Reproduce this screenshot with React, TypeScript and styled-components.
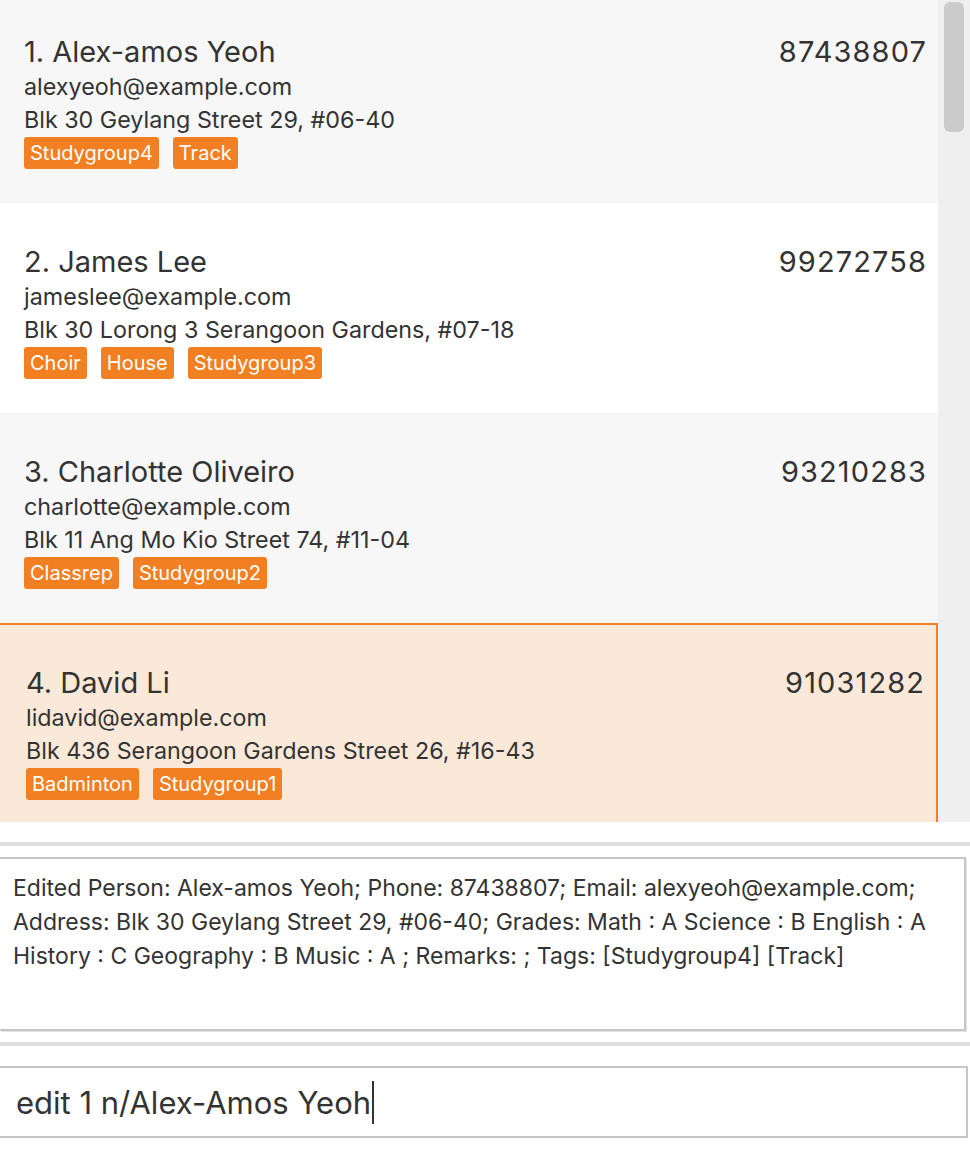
import styled, { createGlobalStyle } from 'styled-components';

const GlobalStyle = createGlobalStyle`
  html, body {
    margin: 0;
    padding: 0;
    background: #ffffff;
  }
  body {
    font-family: Inter, "Noto Sans", "Liberation Sans", sans-serif;
    color: #333333;
  }
`;

const palette = {
  text: '#333333',
  orange: '#f28023',
  selected: '#fae9d8',
  odd: '#f7f7f7',
  track: '#efefef',
  thumb: '#cbcbcb',
  rule: '#dfdfdf',
  border: '#c6c6c6',
};

const Page = styled.div`
  width: 970px;
  height: 1154px;
  overflow: hidden;
  display: flex;
  flex-direction: column;
`;

const ListArea = styled.div`
  height: 822px;
  display: flex;
  overflow: hidden;
`;

const CardColumn = styled.div`
  flex: 1;
  overflow: hidden;
`;

// the list is scrolled down a few pixels in the reference
const CardStack = styled.div`
  margin-top: -7px;
  display: flex;
  flex-direction: column;
`;

const Card = styled.div<{ $odd: boolean; $selected: boolean }>`
  height: 210px;
  box-sizing: border-box;
  padding: 40px 12px 0 24px;
  background: ${p => (p.$selected ? palette.selected : p.$odd ? palette.odd : '#ffffff')};
  ${p =>
    p.$selected &&
    `
    border-top: 2px solid ${palette.orange};
    border-right: 2px solid ${palette.orange};
    padding-top: 39px;
    padding-left: 26px;
    padding-right: 12px;
  `}
`;

const TopRow = styled.div`
  display: flex;
  justify-content: space-between;
  align-items: baseline;
`;

const Name = styled.div`
  font-size: 29px;
  line-height: 37px;
  color: ${palette.text};
`;

const Phone = styled.div`
  font-size: 29px;
  line-height: 37px;
  letter-spacing: 1.1px;
  margin-right: -1px;
  color: ${palette.text};
`;

const Detail = styled.div`
  font-size: 23.3px;
  line-height: 33px;
  color: ${palette.text};
`;

const TagRow = styled.div`
  display: flex;
  gap: 14px;
  margin-top: 1px;
`;

const Tag = styled.span`
  height: 32px;
  line-height: 32px;
  padding: 0 6px;
  border-radius: 3px;
  background: ${palette.orange};
  color: #ffffff;
  font-size: 20px;
`;

const ScrollTrack = styled.div`
  width: 32px;
  background: ${palette.track};
  padding: 2px 6px 0 6px;
  box-sizing: border-box;
`;

const ScrollThumb = styled.div`
  height: 130px;
  border-radius: 6px;
  background: ${palette.thumb};
`;

const Rule = styled.div<{ $top: number; $bottom: number }>`
  height: 4px;
  background: ${palette.rule};
  margin: ${p => `${p.$top}px 0 ${p.$bottom}px 0`};
`;

const ResultBox = styled.div`
  width: 966px;
  height: 174px;
  box-sizing: border-box;
  border: 2px solid ${palette.border};
  border-left: none;
  box-shadow: 1px 1px 0 #e4e4e4;
  padding: 12px 0 0 13px;
  color: ${palette.text};
`;

const ResultLine = styled.div`
  font-size: 23px;
  line-height: 34px;
  white-space: nowrap;
`;

const CommandBox = styled.div`
  width: 968px;
  height: 72px;
  box-sizing: border-box;
  border: 2px solid ${palette.border};
  border-left: none;
  padding-left: 16px;
  display: flex;
  align-items: center;
  font-size: 31px;
  color: ${palette.text};
`;

const Caret = styled.span`
  display: inline-block;
  width: 2px;
  height: 43px;
  background: ${palette.text};
  margin-left: 1px;
`;

interface Person {
  name: string;
  phone: string;
  email: string;
  address: string;
  tags: string[];
}

const persons: Person[] = [
  {
    name: 'Alex-amos Yeoh',
    phone: '87438807',
    email: 'alexyeoh@example.com',
    address: 'Blk 30 Geylang Street 29, #06-40',
    tags: ['Studygroup4', 'Track'],
  },
  {
    name: 'James Lee',
    phone: '99272758',
    email: 'jameslee@example.com',
    address: 'Blk 30 Lorong 3 Serangoon Gardens, #07-18',
    tags: ['Choir', 'House', 'Studygroup3'],
  },
  {
    name: 'Charlotte Oliveiro',
    phone: '93210283',
    email: 'charlotte@example.com',
    address: 'Blk 11 Ang Mo Kio Street 74, #11-04',
    tags: ['Classrep', 'Studygroup2'],
  },
  {
    name: 'David Li',
    phone: '91031282',
    email: 'lidavid@example.com',
    address: 'Blk 436 Serangoon Gardens Street 26, #16-43',
    tags: ['Badminton', 'Studygroup1'],
  },
  {
    name: 'Irfan Ibrahim',
    phone: '92492021',
    email: 'irfan@example.com',
    address: 'Blk 47 Tampines Street 20, #17-35',
    tags: ['Classmates'],
  },
];

const resultLines = [
  'Edited Person: Alex-amos Yeoh; Phone: 87438807; Email: alexyeoh@example.com;',
  'Address: Blk 30 Geylang Street 29, #06-40; Grades: Math : A Science : B English : A',
  'History : C Geography : B Music : A ; Remarks: ; Tags: [Studygroup4] [Track]',
];

const App: React.FC = () => {
  const selectedIndex = 3;

  return (
    <Page>
      <GlobalStyle />
      <ListArea>
        <CardColumn>
          <CardStack>
            {persons.map((person, index) => (
              <Card key={index} $odd={index % 2 === 0} $selected={index === selectedIndex}>
                <TopRow>
                  <Name>
                    {index + 1}. {person.name}
                  </Name>
                  <Phone>{person.phone}</Phone>
                </TopRow>
                <Detail>{person.email}</Detail>
                <Detail>{person.address}</Detail>
                <TagRow>
                  {person.tags.map(tag => (
                    <Tag key={tag}>{tag}</Tag>
                  ))}
                </TagRow>
              </Card>
            ))}
          </CardStack>
        </CardColumn>
        <ScrollTrack>
          <ScrollThumb />
        </ScrollTrack>
      </ListArea>
      <Rule $top={20} $bottom={11} />
      <ResultBox>
        {resultLines.map((line, index) => (
          <ResultLine key={index}>{line}</ResultLine>
        ))}
      </ResultBox>
      <Rule $top={11} $bottom={20} />
      <CommandBox>
        edit 1 n/Alex-Amos Yeoh
        <Caret />
      </CommandBox>
    </Page>
  );
};

export default App;
